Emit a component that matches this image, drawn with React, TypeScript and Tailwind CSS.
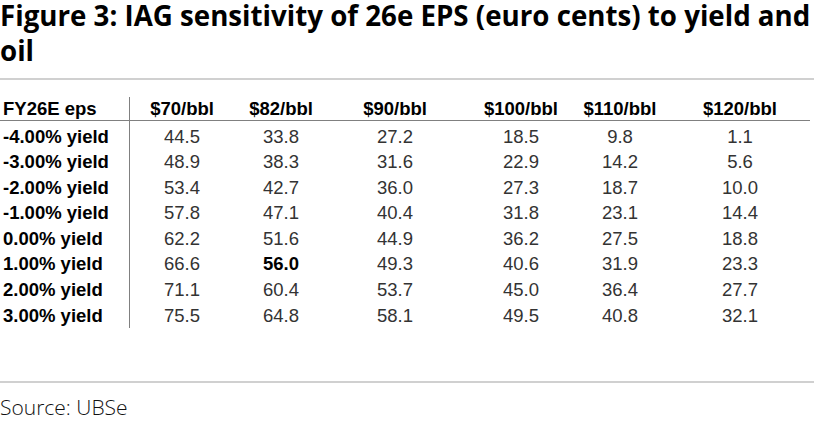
const headers = ['$70/bbl', '$82/bbl', '$90/bbl', '$100/bbl', '$110/bbl', '$120/bbl'];

const rows: Array<{ label: string; values: string[] }> = [
  { label: '-4.00% yield', values: ['44.5', '33.8', '27.2', '18.5', '9.8', '1.1'] },
  { label: '-3.00% yield', values: ['48.9', '38.3', '31.6', '22.9', '14.2', '5.6'] },
  { label: '-2.00% yield', values: ['53.4', '42.7', '36.0', '27.3', '18.7', '10.0'] },
  { label: '-1.00% yield', values: ['57.8', '47.1', '40.4', '31.8', '23.1', '14.4'] },
  { label: '0.00% yield', values: ['62.2', '51.6', '44.9', '36.2', '27.5', '18.8'] },
  { label: '1.00% yield', values: ['66.6', '56.0', '49.3', '40.6', '31.9', '23.3'] },
  { label: '2.00% yield', values: ['71.1', '60.4', '53.7', '45.0', '36.4', '27.7'] },
  { label: '3.00% yield', values: ['75.5', '64.8', '58.1', '49.5', '40.8', '32.1'] },
];

// base case sits at 1.00% yield, $82/bbl
const isBase = (r: number, c: number) => r === 5 && c === 1;

export default function App() {
  return (
    <div className="w-[828px] h-[432px] bg-white overflow-hidden">
      <h1 className="w-[828px] text-[27.7px] font-bold text-black font-['Open_Sans',sans-serif] whitespace-nowrap">
        <div className="leading-[31px]">Figure 3: IAG sensitivity of 26e EPS (euro cents) to yield and</div>
        <div className="leading-[39px]">oil</div>
      </h1>

      <div className="mt-[8px] w-[814px] h-[2px] bg-[#d0d0d0]" />

      <div className="mt-[17px] w-[810px] font-['Liberation_Sans',Arial,sans-serif] text-[18.5px]">
        <div className="grid grid-cols-[130px_104px_94px_134px_118px_80px_150px] font-bold text-black">
          <div className="h-[24px] leading-[23px] pl-[3px] border-r border-b border-[#808080]">FY26E eps</div>
          {headers.map((h, i) => (
            <div
              key={h}
              className={`h-[24px] leading-[23px] text-center border-b border-[#808080] ${i === 5 ? 'pl-[10px]' : ''}`}
            >
              {h}
            </div>
          ))}
        </div>

        {rows.map((row, r) => (
          <div key={row.label} className="grid grid-cols-[130px_104px_94px_134px_118px_80px_150px]">
            <div
              className={`leading-[25.6px] pl-[3px] font-bold text-black border-r border-[#808080] ${r === 0 ? 'pt-[2.5px]' : ''}`}
            >
              {row.label}
            </div>
            {row.values.map((v, c) => (
              <div
                key={c}
                className={`leading-[25.6px] text-center ${r === 0 ? 'pt-[2.5px]' : ''} ${c === 5 ? 'pl-[10px]' : ''} ${isBase(r, c) ? 'font-bold text-black' : 'text-[#333333]'}`}
              >
                {v}
              </div>
            ))}
          </div>
        ))}
      </div>

      <div className="mt-[53px] w-[814px] h-[2px] bg-[#d0d0d0]" />

      <p className="mt-[9px] text-[21px] leading-[30px] font-light text-[#111] font-['Open_Sans',sans-serif] whitespace-nowrap">
        Source: UBSe
      </p>
    </div>
  );
}
